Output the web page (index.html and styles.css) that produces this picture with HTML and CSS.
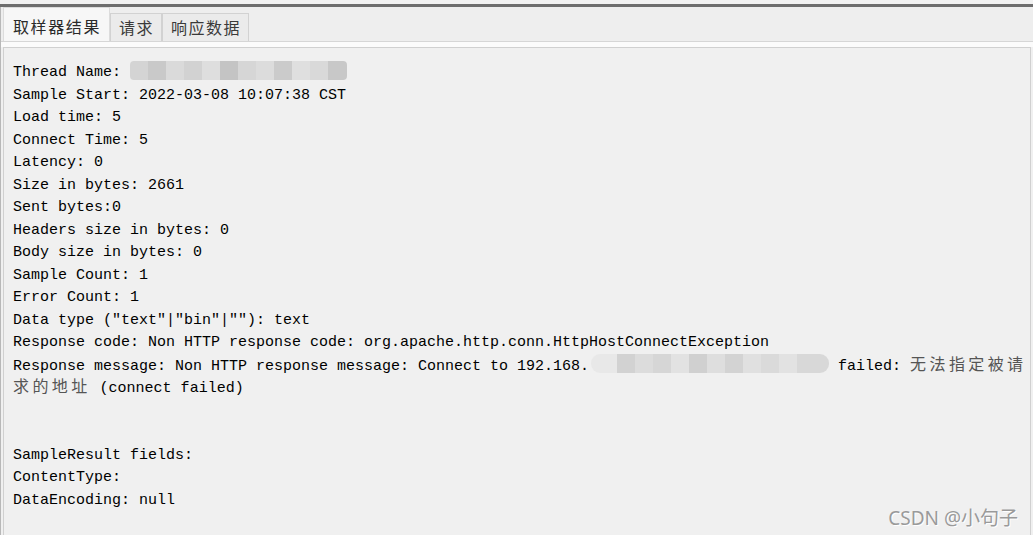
FILE: index.html
```html
<!DOCTYPE html>
<html lang="zh-CN">
<head>
  <meta charset="UTF-8">
  <title>取样器结果</title>
  <link rel="stylesheet" href="styles.css">
</head>
<body>
  <div class="topbar"></div>
  <div class="frame">
    <div class="tabs">
      <div class="tab active">取样器结果</div>
      <div class="tab">请求</div>
      <div class="tab">响应数据</div>
    </div>
    <div class="gap"></div>
    <div class="panel">
      <div class="line">Thread Name: <span class="mask mask-name"></span></div>
      <div class="line">Sample Start: 2022-03-08 10:07:38 CST</div>
      <div class="line">Load time: 5</div>
      <div class="line">Connect Time: 5</div>
      <div class="line">Latency: 0</div>
      <div class="line">Size in bytes: 2661</div>
      <div class="line">Sent bytes:0</div>
      <div class="line">Headers size in bytes: 0</div>
      <div class="line">Body size in bytes: 0</div>
      <div class="line">Sample Count: 1</div>
      <div class="line">Error Count: 1</div>
      <div class="line">Data type ("text"|"bin"|""): text</div>
      <div class="line">Response code: Non HTTP response code: org.apache.http.conn.HttpHostConnectException</div>
      <div class="line">Response message: Non HTTP response message: Connect to 192.168.<span class="mask mask-ip"></span>failed: <span class="cjk">无法指定被请</span></div>
      <div class="line"><span class="cjk">求的地址</span> (connect failed)</div>
      <div class="line">&nbsp;</div>
      <div class="line">&nbsp;</div>
      <div class="line">SampleResult fields:</div>
      <div class="line">ContentType:</div>
      <div class="line">DataEncoding: null</div>
    </div>
  </div>
  <div class="watermark">CSDN @小句子</div>
</body>
</html>
```

FILE: styles.css
```css
body {
  margin: 0;
  background-color: #f0f0f0;
  font-family: "Liberation Mono", monospace;
  overflow: hidden;
}

.topbar {
  height: 4px;
  background-color: #f2f2f2;
  border-bottom: 3px solid #6e6e6e;
}

.frame {
  border-left: 1px solid #b8b8b8;
  height: 528px;
}

.tabs {
  display: flex;
  align-items: flex-end;
  height: 34px;
  padding-left: 2px;
  background-color: #eeeeee;
  border-bottom: 1px solid #d6d6d6;
}

.tab {
  font-family: "Noto Sans CJK SC", sans-serif;
  font-size: 16px;
  letter-spacing: 1.5px;
  color: #3a3a3a;
  height: 28px;
  line-height: 27px;
  padding: 0 7px 0 8px;
  background-color: #ebebeb;
  border: 1px solid #d2d2d2;
  border-bottom: none;
  box-sizing: border-box;
}

.tab.active {
  height: 34px;
  line-height: 36px;
  padding: 0 8px 0 9px;
  letter-spacing: 1.6px;
  background-color: #f7f7f7;
  border-color: #dcdcdc;
  color: #2a2a2a;
}

.gap {
  height: 5px;
  background-color: #fbfbfb;
}

.panel {
  margin: 0 2px 0 2px;
  padding: 14px 9px 10px;
  height: 480px;
  background-color: #f0f0f0;
  border: 1px solid #d0d0d0;
  border-bottom: none;
  font-size: 15px;
  line-height: 22.5px;
  color: #000;
}

.line {
  white-space: pre;
  height: 22.5px;
}

.cjk {
  font-family: "Noto Sans CJK SC", sans-serif;
  font-size: 16px;
  line-height: 1;
  letter-spacing: 3.4px;
  color: #555;
}

.mask {
  display: inline-block;
  vertical-align: middle;
  height: 19px;
  border-radius: 9px;
  filter: blur(0.6px);
}

.mask-name {
  width: 217px;
  margin-top: -4px;
  background: linear-gradient(90deg,
    #d4d4d4 0 18px, #c9c9c9 18px 36px, #dadada 36px 54px, #d2d2d2 54px 72px,
    #dedede 72px 90px, #c4c4c4 90px 108px, #d6d6d6 108px 126px, #dcdcdc 126px 144px,
    #cbcbcb 144px 162px, #dfdfdf 162px 180px, #d9d9d9 180px 198px, #c8c8c8 198px);
  border-radius: 4px;
}

.mask-ip {
  width: 238px;
  margin: -4px 9px 0 2px;
  background: linear-gradient(90deg,
    #e8e8e8 0 26px, #d2d2d2 26px 44px, #dcdcdc 44px 62px, #d6d6d6 62px 80px,
    #e2e2e2 80px 98px, #d0d0d0 98px 116px, #dedede 116px 134px, #d3d3d3 134px 152px,
    #e0e0e0 152px 170px, #dadada 170px 188px, #e2e2e2 188px 206px, #d8d8d8 206px);
}

.watermark {
  position: absolute;
  right: 15px;
  bottom: 4px;
  font-family: "Noto Sans", "Noto Sans CJK SC", sans-serif;
  font-size: 19px;
  color: #9a9a9a;
  text-shadow: 1px 1px 0 #ffffff;
}
```
